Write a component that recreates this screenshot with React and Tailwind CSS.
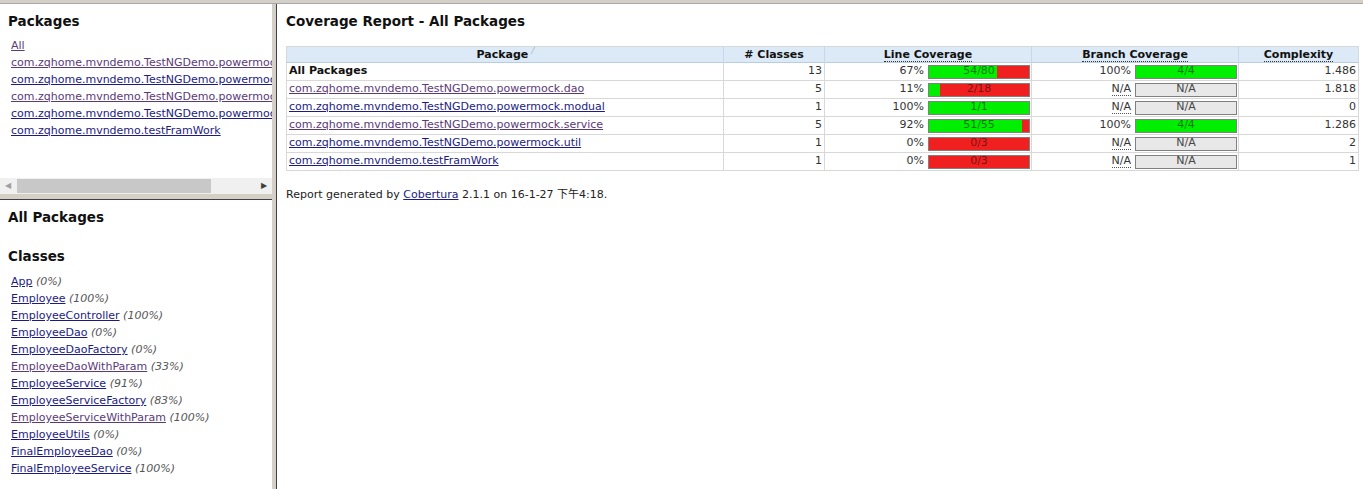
const FONT = { fontFamily: '"DejaVu Sans", Verdana, "Noto Sans CJK SC", sans-serif' };

const packages = [
  { name: "com.zqhome.mvndemo.TestNGDemo.powermock.dao", visited: true },
  { name: "com.zqhome.mvndemo.TestNGDemo.powermock.modual", visited: false },
  { name: "com.zqhome.mvndemo.TestNGDemo.powermock.service", visited: true },
  { name: "com.zqhome.mvndemo.TestNGDemo.powermock.util", visited: false },
  { name: "com.zqhome.mvndemo.testFramWork", visited: false },
];

const classes = [
  ["App", "0%", false],
  ["Employee", "100%", false],
  ["EmployeeController", "100%", false],
  ["EmployeeDao", "0%", false],
  ["EmployeeDaoFactory", "0%", false],
  ["EmployeeDaoWithParam", "33%", true],
  ["EmployeeService", "91%", false],
  ["EmployeeServiceFactory", "83%", false],
  ["EmployeeServiceWithParam", "100%", true],
  ["EmployeeUtils", "0%", false],
  ["FinalEmployeeDao", "0%", false],
  ["FinalEmployeeService", "100%", false],
];

const rows = [
  { name: "All Packages", bold: true, classes: 13, line: [54, 80], branch: [4, 4], cx: "1.486" },
  { name: packages[0].name, visited: true, classes: 5, line: [2, 18], branch: null, cx: "1.818" },
  { name: packages[1].name, classes: 1, line: [1, 1], branch: null, cx: "0" },
  { name: packages[2].name, visited: true, classes: 5, line: [51, 55], branch: [4, 4], cx: "1.286" },
  { name: packages[3].name, classes: 1, line: [0, 3], branch: null, cx: "2" },
  { name: packages[4].name, classes: 1, line: [0, 3], branch: null, cx: "1" },
];

function Link({ children, visited }) {
  return (
    <a href="#" className={`underline ${visited ? "text-[#5b3a78]" : "text-[#1c1c80]"}`}>
      {children}
    </a>
  );
}

function Coverage({ value }) {
  if (!value) {
    return (
      <div className="flex items-center justify-end gap-[4px] pr-[1px]">
        <span className="border-b border-dotted border-[#555] leading-[12px] text-[#333]">N/A</span>
        <div className="flex h-[14px] w-[102px] items-center justify-center border border-[#808080] bg-[#e8e8e8] text-[#444]">
          N/A
        </div>
      </div>
    );
  }
  const pct = Math.floor((value[0] / value[1]) * 100);
  return (
    <div className="flex items-center justify-end gap-[4px] pr-[1px]">
      <span className="text-[#333]">{pct}%</span>
      <div className="relative h-[14px] w-[102px] border border-[#808080] bg-[#f02020]">
        <div className="h-full bg-[#00ee00]" style={{ width: `${(value[0] / value[1]) * 100}%` }} />
        <span className="absolute inset-0 flex items-center justify-center text-black/50">
          {value[0]}/{value[1]}
        </span>
      </div>
    </div>
  );
}

function ScrollBar() {
  return (
    <div className="flex h-[16px] items-center bg-[#f0f0f0]">
      <span className="w-[16px] text-center text-[8px] text-[#a0a0a0]">◀</span>
      <div className="ml-[1px] h-[14px] w-[194px] bg-[#c8c8c8]" />
      <div className="flex-1" />
      <span className="w-[16px] text-center text-[8px] text-[#404040]">▶</span>
    </div>
  );
}

export default function App() {
  return (
    <div style={FONT} className="flex h-[489px] w-full flex-col overflow-hidden bg-white text-[11px]">
      <div className="h-[4px] border-b border-[#a8a8a8] bg-[#d4d0c8]" />
      <div className="flex min-h-0 flex-1">
        {/* left frames */}
        <div className="flex w-[272px] flex-col">
          <div className="flex h-[190px] flex-col">
            <div className="flex-1 overflow-hidden whitespace-nowrap">
              <h2 className="pl-[8px] pt-[8px] text-[13.5px] font-bold leading-[18px] text-[#111]">Packages</h2>
              <ul className="mt-[7px] pl-[11px] leading-[17px]">
                <li><Link visited>All</Link></li>
                {packages.map((p, i) => (
                  <li key={i}><Link visited={p.visited}>{p.name}</Link></li>
                ))}
              </ul>
            </div>
            <ScrollBar />
          </div>
          <div className="h-[5px] bg-[#d4d0c8]" />
          <div className="flex-1 overflow-hidden border-t border-[#404040] whitespace-nowrap">
            <h2 className="pl-[8px] pt-[8px] text-[13.5px] font-bold leading-[18px] text-[#111]">All Packages</h2>
            <h2 className="mt-[21px] pl-[8px] text-[13.5px] font-bold leading-[18px] text-[#111]">Classes</h2>
            <ul className="mt-[8px] pl-[11px] leading-[17px]">
              {classes.map(([n, p, v]) => (
                <li key={n}>
                  <Link visited={v}>{n}</Link> <i className="text-[#555]">({p})</i>
                </li>
              ))}
            </ul>
          </div>
        </div>
        <div className="w-[4px] bg-[#d4d0c8]" />
        {/* right frame */}
        <div className="flex-1 overflow-hidden border-l border-[#404040] pl-[9px]">
          <h1 className="pt-[8px] text-[13.5px] font-bold leading-[18px] text-[#111]">Coverage Report - All Packages</h1>
          <table className="mt-[16px] w-[1072px] table-fixed border-collapse border border-[#d8d8d8]">
            <colgroup>
              <col className="w-[437px]" />
              <col className="w-[101px]" />
              <col className="w-[207px]" />
              <col className="w-[207px]" />
              <col className="w-[120px]" />
            </colgroup>
            <thead>
              <tr className="h-[16px] border-b border-[#b8cce4] bg-[#dce9f7] text-[11px] font-bold text-[#111]">
                <th className="border-r border-[#c8d8ea] p-0 leading-[15px]">
                  Package <sup className="text-[8px] font-normal text-[#aaa]">⁄</sup>
                </th>
                <th className="border-r border-[#c8d8ea] p-0 leading-[15px]"># Classes</th>
                <th className="border-r border-[#c8d8ea] p-0 leading-[15px]">
                  <span className="border-b border-dotted border-[#333]">Line Coverage</span>
                </th>
                <th className="border-r border-[#c8d8ea] p-0 leading-[15px]">
                  <span className="border-b border-dotted border-[#333]">Branch Coverage</span>
                </th>
                <th className="p-0 leading-[15px]">
                  <span className="border-b border-dotted border-[#333]">Complexity</span>
                </th>
              </tr>
            </thead>
            <tbody>
              {rows.map((r, i) => (
                <tr key={i} className="h-[18px] border-b border-[#d8d8d8]">
                  <td className="whitespace-nowrap border-r border-[#d8d8d8] px-[2px] py-0">
                    {r.bold ? <b className="text-[#111]">{r.name}</b> : <Link visited={r.visited}>{r.name}</Link>}
                  </td>
                  <td className="border-r border-[#d8d8d8] px-[2px] py-0 text-right text-[#333]">{r.classes}</td>
                  <td className="border-r border-[#d8d8d8] p-0"><Coverage value={r.line} /></td>
                  <td className="border-r border-[#d8d8d8] p-0"><Coverage value={r.branch} /></td>
                  <td className="px-[2px] py-0 text-right text-[#333]">{r.cx}</td>
                </tr>
              ))}
            </tbody>
          </table>
          <p className="mt-[16px] text-[#222]">
            Report generated by <Link>Cobertura</Link> 2.1.1 on 16-1-27 下午4:18.
          </p>
        </div>
      </div>
    </div>
  );
}
